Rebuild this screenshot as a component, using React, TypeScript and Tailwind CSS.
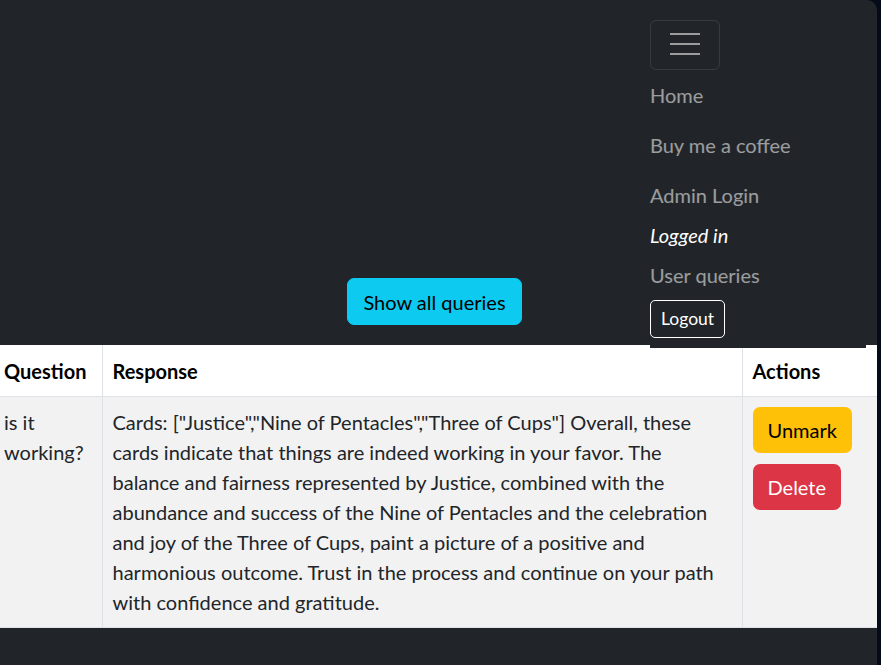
import React from "react";

const responseLines = [
  'Cards: ["Justice","Nine of Pentacles","Three of Cups"] Overall, these',
  "cards indicate that things are indeed working in your favor. The",
  "balance and fairness represented by Justice, combined with the",
  "abundance and success of the Nine of Pentacles and the celebration",
  "and joy of the Three of Cups, paint a picture of a positive and",
  "harmonious outcome. Trust in the process and continue on your path",
  "with confidence and gratitude.",
];

export default function App() {
  return (
    <div
      className="w-[881px] h-[665px] bg-[#060b19] overflow-hidden"
      style={{ fontFamily: 'Lato, "Noto Sans", sans-serif' }}
    >
      <div className="relative w-[877px] h-[665px] bg-[#212529] rounded-tr-[10px] overflow-hidden">
        {/* Header */}
        <div className="relative h-[345px] flex items-end justify-center pr-[8px] pb-[20px]">
          <button className="h-[47px] px-[15px] rounded-[7px] bg-[#0dcaf0] border border-[#0dcaf0] text-[20px] leading-[30px] text-black">
            Show all queries
          </button>

          {/* Collapsed nav menu */}
          <nav className="absolute left-[650px] top-[20px] w-[216px] pb-[10px] bg-[#212529] z-10 flex flex-col items-start">
            <button className="w-[70px] h-[50px] rounded-[6px] border border-white/10 flex items-center justify-center">
              <svg width="30" height="30" viewBox="0 0 30 30">
                <path
                  d="M0 4h30M0 14h30M0 24h30"
                  stroke="rgba(255,255,255,0.55)"
                  strokeWidth="2"
                  strokeLinecap="round"
                  fill="none"
                />
              </svg>
            </button>
            <a className="py-[10px] text-[20px] leading-[30px] text-white/55">Home</a>
            <a className="py-[10px] text-[20px] leading-[30px] text-white/55">Buy me a coffee</a>
            <a className="py-[10px] text-[20px] leading-[30px] text-white/55">Admin Login</a>
            <span className="text-[20px] leading-[30px] text-white italic">Logged in</span>
            <a className="py-[10px] text-[20px] leading-[30px] text-white/55">User queries</a>
            <button className="h-[38px] px-[10px] rounded-[5px] border border-white text-white text-[17.5px] leading-[26px]">
              Logout
            </button>
          </nav>
        </div>

        {/* Table */}
        <table className="-ml-[6px] w-[883px] border-collapse text-[20px] leading-[30px] text-[#212529] table-fixed">
          <colgroup>
            <col className="w-[108px]" />
            <col className="w-[640px]" />
            <col className="w-[135px]" />
          </colgroup>
          <thead>
            <tr className="bg-white">
              <th className="pt-[11px] pb-[10px] px-[10px] text-left font-bold text-black border-b border-r border-[#dee2e6]">
                Question
              </th>
              <th className="pt-[11px] pb-[10px] px-[10px] text-left font-bold text-black border-b border-r border-[#dee2e6]">
                Response
              </th>
              <th className="pt-[11px] pb-[10px] px-[10px] text-left font-bold text-black border-b border-[#dee2e6]">
                Actions
              </th>
            </tr>
          </thead>
          <tbody>
            <tr className="bg-[#f2f2f2]">
              <td className="p-[10px] align-top border-r border-b border-[#dee2e6]">
                <span className="block">is it</span>
                <span className="block whitespace-nowrap">working?</span>
              </td>
              <td className="p-[10px] align-top border-r border-b border-[#dee2e6]">
                {responseLines.map((l, i) => (
                  <span key={i} className="block whitespace-nowrap">
                    {l}
                  </span>
                ))}
              </td>
              <td className="p-[10px] align-top border-b border-[#dee2e6]">
                <div className="flex flex-col items-start gap-[11px]">
                  <button className="h-[46px] px-[15px] rounded-[7px] bg-[#ffc107] text-black text-[20px] leading-[30px]">
                    Unmark
                  </button>
                  <button className="h-[46px] px-[15px] rounded-[7px] bg-[#dc3545] text-white text-[20px] leading-[30px]">
                    Delete
                  </button>
                </div>
              </td>
            </tr>
          </tbody>
        </table>
      </div>
    </div>
  );
}
